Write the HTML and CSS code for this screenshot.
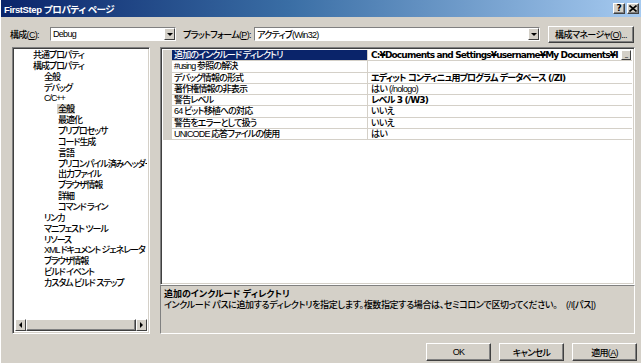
FILE: index.html
```html
<!DOCTYPE html>
<html lang="ja">
<head>
  <meta charset="UTF-8">
  <title>FirstStep プロパティ ページ</title>
  <link rel="stylesheet" href="styles.css">
</head>
<body>
  <div class="dialog">
    <div class="titlebar">
      <span class="title">FirstStep プロパティ ページ</span>
      <div class="caption-buttons">
        <button class="cap-btn">?</button>
        <button class="cap-btn">
          <svg width="8" height="7" viewBox="0 0 8 7"><path d="M0.5 0.5 L7.5 6.5 M7.5 0.5 L0.5 6.5" stroke="#000" stroke-width="1.6"/></svg>
        </button>
      </div>
    </div>

    <div class="config">
      <label class="lbl">構成(<u>C</u>):</label>
      <div class="combo combo-config">
        <span class="combo-text">Debug</span>
        <span class="combo-arrow"><i class="tri-down"></i></span>
      </div>
      <label class="lbl lbl-platform">プラットフォーム(<u>P</u>):</label>
      <div class="combo combo-platform">
        <span class="combo-text">アクティブ(Win32)</span>
        <span class="combo-arrow"><i class="tri-down"></i></span>
      </div>
      <button class="btn btn-manager">構成マネージャ(<u>O</u>)...</button>
    </div>

    <div class="main">
      <div class="tree sunken">
        <ul class="tree-list">
          <li class="lv0">共通プロパティ</li>
          <li class="lv0">構成プロパティ</li>
          <li class="lv1">全般</li>
          <li class="lv1">デバッグ</li>
          <li class="lv1">C/C++</li>
          <li class="lv2"><span class="sel">全般</span></li>
          <li class="lv2">最適化</li>
          <li class="lv2">プリプロセッサ</li>
          <li class="lv2">コード生成</li>
          <li class="lv2">言語</li>
          <li class="lv2">プリコンパイル済みヘッダー</li>
          <li class="lv2">出力ファイル</li>
          <li class="lv2">ブラウザ情報</li>
          <li class="lv2">詳細</li>
          <li class="lv2">コマンド ライン</li>
          <li class="lv1">リンカ</li>
          <li class="lv1">マニフェスト ツール</li>
          <li class="lv1">リソース</li>
          <li class="lv1">XML ドキュメント ジェネレータ</li>
          <li class="lv1">ブラウザ情報</li>
          <li class="lv1">ビルド イベント</li>
          <li class="lv1">カスタム ビルド ステップ</li>
        </ul>
        <div class="hscroll">
          <span class="sb-btn"><i class="tri-left"></i></span>
          <span class="sb-track"><span class="sb-thumb"></span></span>
          <span class="sb-btn"><i class="tri-right"></i></span>
        </div>
      </div>

      <div class="right">
        <div class="grid sunken">
          <div class="row selected">
            <span class="name">追加のインクルード ディレクトリ</span>
            <span class="value bold">C:¥Documents and Settings¥username¥My Documents¥I</span>
            <span class="dots">...</span>
          </div>
          <div class="row">
            <span class="name">#using 参照の解決</span>
            <span class="value"></span>
          </div>
          <div class="row">
            <span class="name">デバッグ情報の形式</span>
            <span class="value bold">エディット コンティニュ用プログラム データベース (/ZI)</span>
          </div>
          <div class="row">
            <span class="name">著作権情報の非表示</span>
            <span class="value">はい (/nologo)</span>
          </div>
          <div class="row">
            <span class="name">警告レベル</span>
            <span class="value bold">レベル 3 (/W3)</span>
          </div>
          <div class="row">
            <span class="name">64 ビット移植への対応</span>
            <span class="value">いいえ</span>
          </div>
          <div class="row">
            <span class="name">警告をエラーとして扱う</span>
            <span class="value">いいえ</span>
          </div>
          <div class="row">
            <span class="name">UNICODE 応答ファイルの使用</span>
            <span class="value">はい</span>
          </div>
        </div>
        <div class="desc">
          <div class="desc-title">追加のインクルード ディレクトリ</div>
          <div class="desc-text">インクルード パスに追加するディレクトリを指定します。複数指定する場合は、セミコロンで区切ってください。&nbsp;&nbsp;&nbsp;&nbsp;(/I[パス])</div>
        </div>
      </div>
    </div>

    <div class="footer">
      <button class="btn btn-foot">OK</button>
      <button class="btn btn-foot">キャンセル</button>
      <button class="btn btn-foot">適用(<u>A</u>)</button>
    </div>
  </div>
</body>
</html>
```

FILE: styles.css
```css
html, body { margin: 0; padding: 0; }
body {
  width: 641px;
  height: 363px;
  overflow: hidden;
  background: #d4d0c8;
  font-family: "Liberation Sans", "Noto Sans CJK JP", sans-serif;
  font-size: 9px;
  font-weight: 500;
  font-feature-settings: "palt";
  letter-spacing: -0.7px;
  color: #000;
  white-space: nowrap;
}
u { text-decoration: underline; }
.dialog {
  height: 363px;
  display: flex;
  flex-direction: column;
  box-sizing: border-box;
  border-left: 1px solid #fff;
}

/* title bar */
.titlebar {
  height: 17px;
  flex: none;
  display: flex;
  align-items: center;
  justify-content: space-between;
  padding: 0 2px 0 3px;
  background: linear-gradient(to right, #0a246a 0%, #3a6ea5 45%, #a6caf0 100%);
}
.title { color: #fff; font-weight: bold; font-size: 9.5px; letter-spacing: -0.4px; }
.caption-buttons { display: flex; gap: 2px; }
.cap-btn {
  width: 12px;
  height: 11px;
  padding: 0;
  display: flex;
  align-items: center;
  justify-content: center;
  background: #d4d0c8;
  border: 1px solid;
  border-color: #fff #404040 #404040 #fff;
  box-shadow: inset -1px -1px #808080;
  font: bold 9px "DejaVu Sans", sans-serif;
  line-height: 1;
}

/* config row */
.config {
  height: 30px;
  flex: none;
  box-sizing: border-box;
  padding-top: 4px;
  display: flex;
  align-items: center;
}
.lbl { margin-left: 9px; width: 40px; }
.lbl-platform { margin-left: 7px; width: 71px; }
.combo {
  height: 14px;
  box-sizing: border-box;
  display: flex;
  align-items: center;
  background: #fff;
  border: 1px solid;
  border-color: #808080 #fff #fff #808080;
}
.combo-config { width: 126px; }
.combo-platform { width: 286px; }
.combo-text { flex: 1; padding-left: 2px; overflow: hidden; }
.combo-arrow {
  width: 11px;
  height: 12px;
  box-sizing: border-box;
  display: flex;
  align-items: center;
  justify-content: center;
  background: #d4d0c8;
  border: 1px solid;
  border-color: #fff #404040 #404040 #fff;
}
.tri-down { width: 0; height: 0; border: 3px solid transparent; border-top: 3px solid #000; border-bottom: 0; }
.tri-left { width: 0; height: 0; border: 3px solid transparent; border-right: 3px solid #000; border-left: 0; }
.tri-right { width: 0; height: 0; border: 3px solid transparent; border-left: 3px solid #000; border-right: 0; }

.btn {
  background: #d4d0c8;
  border: 1px solid;
  border-color: #fff #404040 #404040 #fff;
  box-shadow: inset -1px -1px #808080;
  font: inherit;
  letter-spacing: inherit;
  color: #000;
  padding: 0;
}
.btn-manager { margin-left: 8px; width: 86px; height: 17px; letter-spacing: -0.6px; }

/* main area */
.main {
  height: 287px;
  flex: none;
  display: flex;
  gap: 10px;
  padding-left: 11px;
}
.sunken {
  box-sizing: border-box;
  border: 1px solid;
  border-color: #808080 #fff #fff #808080;
  box-shadow: inset 1px 1px #404040, inset -1px -1px #d4d0c8;
}
.tree {
  width: 138px;
  background: #fff;
  display: flex;
  flex-direction: column;
  padding: 2px;
}
.tree-list {
  flex: 1;
  list-style: none;
  margin: 0;
  padding: 0;
  overflow: hidden;
  letter-spacing: -1.05px;
}
.tree-list li { height: 10.86px; line-height: 10.86px; }
.lv0 { padding-left: 18px; }
.lv1 { padding-left: 29px; }
.lv2 { padding-left: 43px; }
.sel { background: #d4d0c8; padding: 0 1px; margin-left: -1px; }

.hscroll {
  height: 12px;
  display: flex;
  background: #ece9e4;
}
.sb-btn {
  width: 11px;
  box-sizing: border-box;
  display: flex;
  align-items: center;
  justify-content: center;
  background: #d4d0c8;
  border: 1px solid;
  border-color: #fff #404040 #404040 #fff;
}
.sb-track { flex: 1; display: flex; }
.sb-thumb {
  flex: 1;
  box-sizing: border-box;
  background: #d4d0c8;
  border: 1px solid;
  border-color: #fff #404040 #404040 #fff;
  box-shadow: inset -1px -1px #808080;
}

.right {
  width: 475px;
  display: flex;
  flex-direction: column;
}
.grid {
  height: 238px;
  background: #fff;
  padding: 2px 2px 2px 2px;
  overflow: hidden;
}
.row {
  height: 11.3px;
  box-sizing: border-box;
  display: flex;
  position: relative;
  border-left: 9px solid #d4d0c8;
  border-bottom: 1px solid #d4d0c8;
  line-height: 10px;
}
.name {
  width: 196px;
  flex: none;
  box-sizing: border-box;
  padding-left: 2px;
  border-right: 1px solid #d4d0c8;
  overflow: hidden;
  letter-spacing: -0.85px;
}
.value {
  flex: 1;
  padding-left: 3px;
  overflow: hidden;
}
.bold { font-weight: bold; font-family: "DejaVu Sans", "Noto Sans CJK JP", sans-serif; letter-spacing: -0.85px; }
.row.selected .name { background: #0a246a; color: #fff; }
.row.selected .value { margin-right: 12px; }
.dots {
  position: absolute;
  right: 1px;
  top: 0;
  width: 10px;
  height: 10px;
  box-sizing: border-box;
  background: #d4d0c8;
  border: 1px solid;
  border-color: #fff #404040 #404040 #fff;
  font-size: 7px;
  line-height: 9px;
  letter-spacing: -1px;
  text-align: center;
}

.desc {
  flex: 1;
  box-sizing: border-box;
  border: 1px solid;
  border-color: #808080 #fff #fff #808080;
  padding: 3px 3px;
  line-height: 11px;
  letter-spacing: -0.35px;
}
.desc-title { font-weight: bold; letter-spacing: 0; }

/* footer */
.footer {
  flex: 1;
  display: flex;
  justify-content: flex-end;
  align-items: flex-start;
  gap: 8px;
  padding: 9px 4px 0 0;
}
.btn-foot { width: 65px; height: 18px; }
```
